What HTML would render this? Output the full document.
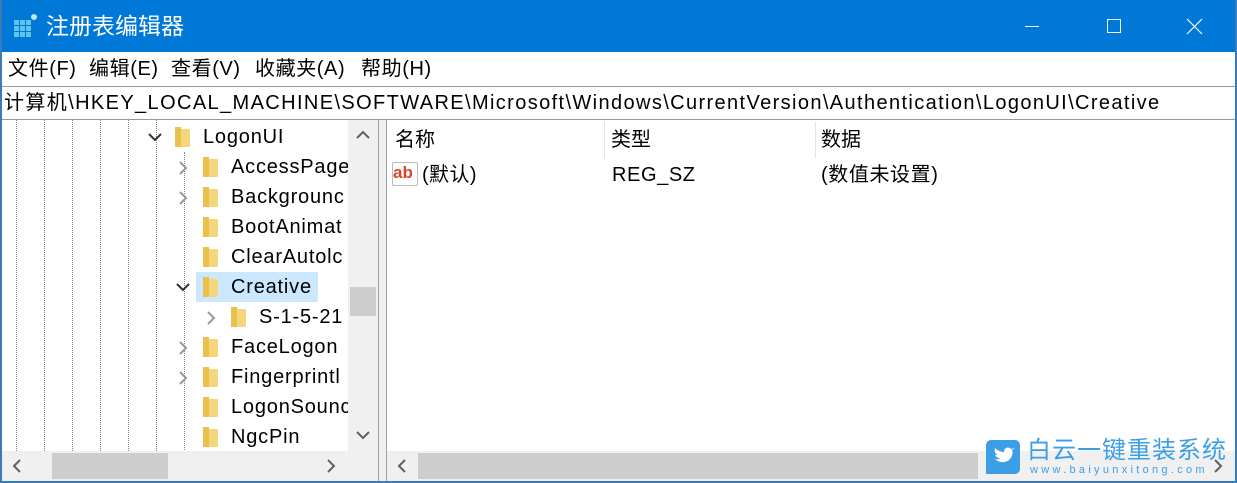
<!DOCTYPE html>
<html><head><meta charset="utf-8"><style>
*{margin:0;padding:0;box-sizing:border-box}
body{width:1237px;height:483px;overflow:hidden;background:#fff;font-family:"Liberation Sans","Noto Sans CJK SC",sans-serif;position:relative;color:#000}
.a{position:absolute}
.t{font-size:20px;white-space:nowrap;line-height:30px}
.tr .t{letter-spacing:0.8px}
.vd{position:absolute;top:0;height:331px;border-left:1px dotted #888}
.fold{position:absolute;width:16px;height:20px}
.fold::before{content:"";position:absolute;left:3px;top:2px;width:12px;height:18px;background:#f5d67a;border-radius:1px}
.fold::after{content:"";position:absolute;left:0;top:0;width:6px;height:20px;background:#e9bf4e}
</style></head><body>
<div class="a" style="left:0;top:0;width:1237px;height:52px;background:#0078d7"></div>
<svg class="a" style="left:14px;top:14px" width="24" height="24"><g fill="#5fc3ea"><rect x="0" y="6" width="5" height="5"/><rect x="6" y="6" width="5" height="5"/><rect x="12" y="6" width="5" height="5"/><rect x="0" y="12" width="5" height="5"/><rect x="6" y="12" width="5" height="5"/><rect x="12" y="12" width="5" height="5"/><rect x="0" y="18" width="5" height="5"/><rect x="6" y="18" width="5" height="5"/><rect x="12" y="18" width="5" height="5"/></g><circle cx="20" cy="3" r="3" fill="#bfe8f7"/></svg>
<div class="a t" style="left:46px;top:11px;color:#fff;font-size:23px">注册表编辑器</div>
<div class="a" style="left:1025px;top:26px;width:14px;height:1px;background:#fff"></div>
<div class="a" style="left:1107px;top:19px;width:14px;height:14px;border:1px solid #fff"></div>
<svg class="a" style="left:1186px;top:18px" width="17" height="17"><path d="M1 1L16 16M16 1L1 16" stroke="#fff" stroke-width="1.2"/></svg>
<div class="a t" style="left:8px;top:54px;font-size:20px;letter-spacing:0.6px">文件(F)</div>
<div class="a t" style="left:89px;top:54px;font-size:20px;letter-spacing:0.6px">编辑(E)</div>
<div class="a t" style="left:171px;top:54px;font-size:20px;letter-spacing:0.6px">查看(V)</div>
<div class="a t" style="left:255px;top:54px;font-size:20px;letter-spacing:0.6px">收藏夹(A)</div>
<div class="a t" style="left:361px;top:54px;font-size:20px;letter-spacing:0.6px">帮助(H)</div>
<div class="a" style="left:0;top:86px;width:1237px;height:34px;border-top:1px solid #999;border-bottom:1px solid #999"></div>
<div class="a t" style="left:4px;top:88px;font-size:20px;letter-spacing:1.38px">计算机\HKEY_LOCAL_MACHINE\SOFTWARE\Microsoft\Windows\CurrentVersion\Authentication\LogonUI\Creative</div>
<div class="a" style="left:0;top:0;width:2px;height:483px;background:#3d7ab8"></div>
<div class="a" style="left:1235px;top:0;width:2px;height:483px;background:#3d7ab8"></div>
<div class="a" style="left:0;top:481px;width:1237px;height:2px;background:#3d7ab8"></div>
<div class="a tr" style="left:0;top:120px;width:348px;height:331px;overflow:hidden">
<div class="vd" style="left:16px"></div><div class="vd" style="left:44px"></div><div class="vd" style="left:72px"></div><div class="vd" style="left:100px"></div><div class="vd" style="left:128px"></div><div class="vd" style="left:156px"></div><div class="vd" style="left:184px;top:32px;height:300px"></div>
<div class="a" style="left:196px;top:152px;width:122px;height:30px;background:#cce8ff"></div>
<svg class="a" style="left:147px;top:12px" width="16" height="10"><path d="M2 2L8 8L14 2" stroke="#333" stroke-width="2" fill="none"/></svg>
<svg class="a" style="left:175px;top:162px" width="16" height="10"><path d="M2 2L8 8L14 2" stroke="#333" stroke-width="2" fill="none"/></svg>
<svg class="a" style="left:178px;top:40px" width="10" height="16"><path d="M2 2L8 8L2 14" stroke="#999" stroke-width="2" fill="none"/></svg>
<svg class="a" style="left:178px;top:70px" width="10" height="16"><path d="M2 2L8 8L2 14" stroke="#999" stroke-width="2" fill="none"/></svg>
<svg class="a" style="left:206px;top:190px" width="10" height="16"><path d="M2 2L8 8L2 14" stroke="#999" stroke-width="2" fill="none"/></svg>
<svg class="a" style="left:178px;top:220px" width="10" height="16"><path d="M2 2L8 8L2 14" stroke="#999" stroke-width="2" fill="none"/></svg>
<svg class="a" style="left:178px;top:250px" width="10" height="16"><path d="M2 2L8 8L2 14" stroke="#999" stroke-width="2" fill="none"/></svg>
<div class="fold" style="left:175px;top:7px"></div><div class="a t" style="left:203px;top:2px">LogonUI</div>
<div class="fold" style="left:203px;top:37px"></div><div class="a t" style="left:231px;top:32px">AccessPage</div>
<div class="fold" style="left:203px;top:67px"></div><div class="a t" style="left:231px;top:62px">Backgrounc</div>
<div class="fold" style="left:203px;top:97px"></div><div class="a t" style="left:231px;top:92px">BootAnimat</div>
<div class="fold" style="left:203px;top:127px"></div><div class="a t" style="left:231px;top:122px">ClearAutolc</div>
<div class="fold" style="left:203px;top:157px"></div><div class="a t" style="left:231px;top:152px">Creative</div>
<div class="fold" style="left:231px;top:187px"></div><div class="a t" style="left:259px;top:182px">S-1-5-21</div>
<div class="fold" style="left:203px;top:217px"></div><div class="a t" style="left:231px;top:212px">FaceLogon</div>
<div class="fold" style="left:203px;top:247px"></div><div class="a t" style="left:231px;top:242px">Fingerprintl</div>
<div class="fold" style="left:203px;top:277px"></div><div class="a t" style="left:231px;top:272px">LogonSounc</div>
<div class="fold" style="left:203px;top:307px"></div><div class="a t" style="left:231px;top:302px">NgcPin</div>
</div>
<div class="a" style="left:348px;top:120px;width:30px;height:332px;background:#f0f0f0"></div>
<div class="a" style="left:350px;top:287px;width:26px;height:29px;background:#cdcdcd"></div>
<svg class="a" style="left:355px;top:130px" width="16" height="10"><path d="M2 8L8 2L14 8" stroke="#606060" stroke-width="2" fill="none"/></svg>
<svg class="a" style="left:355px;top:430px" width="16" height="10"><path d="M2 2L8 8L14 2" stroke="#606060" stroke-width="2" fill="none"/></svg>
<div class="a" style="left:2px;top:451px;width:376px;height:30px;background:#f0f0f0"></div>
<div class="a" style="left:52px;top:453px;width:116px;height:26px;background:#cdcdcd"></div>
<svg class="a" style="left:12px;top:458px" width="10" height="16"><path d="M8 2L2 8L8 14" stroke="#606060" stroke-width="2" fill="none"/></svg>
<svg class="a" style="left:326px;top:458px" width="10" height="16"><path d="M2 2L8 8L2 14" stroke="#606060" stroke-width="2" fill="none"/></svg>
<div class="a" style="left:378px;top:120px;width:9px;height:361px;background:#f0f0f0;border-left:1px solid #a0a0a0;border-right:1px solid #a0a0a0"></div>
<div class="a t" style="left:395px;top:125px">名称</div>
<div class="a" style="left:604px;top:122px;width:1px;height:36px;background:#e5e5e5"></div>
<div class="a t" style="left:611px;top:125px">类型</div>
<div class="a" style="left:815px;top:122px;width:1px;height:36px;background:#e5e5e5"></div>
<div class="a t" style="left:821px;top:125px">数据</div>
<div class="a" style="left:392px;top:162px;width:26px;height:24px;background:#fff;border:1px solid #bbb;border-radius:2px"></div>
<div class="a" style="left:393px;top:163px;font:bold 17px 'Liberation Sans',sans-serif;color:#d9472b;line-height:20px">ab</div>
<div class="a t" style="left:422px;top:160px;letter-spacing:0.4px">(默认)</div>
<div class="a t" style="left:612px;top:160px;letter-spacing:0.6px">REG_SZ</div>
<div class="a t" style="left:821px;top:160px;letter-spacing:0.6px">(数值未设置)</div>
<div class="a" style="left:387px;top:451px;width:848px;height:30px;background:#f0f0f0"></div>
<div class="a" style="left:418px;top:453px;width:560px;height:26px;background:#cdcdcd"></div>
<svg class="a" style="left:397px;top:458px" width="10" height="16"><path d="M8 2L2 8L8 14" stroke="#606060" stroke-width="2" fill="none"/></svg>
<svg class="a" style="left:1213px;top:458px" width="10" height="16"><path d="M2 2L8 8L2 14" stroke="#606060" stroke-width="2" fill="none"/></svg>
<div class="a" style="left:986px;top:440px;width:34px;height:34px;background:#3c9fe6;border-radius:5px 5px 5px 0"></div>
<svg class="a" style="left:992px;top:446px" width="24" height="22"><path d="M2 12C5 16 12 18 17 14C21 10 21 6 20 4L23 2L19 3C16 0 12 2 12 6C8 6 5 4 3 2C2 5 3 8 6 9L3 9C4 11 6 12 8 12C6 14 4 14 2 12Z" fill="#fff"/></svg>
<div class="a" style="left:1027px;top:438px;font-size:24px;color:#3c9fe6;letter-spacing:1px;line-height:26px;white-space:nowrap">白云一键重装系统</div>
<div class="a" style="left:1030px;top:464px;font-size:11px;color:#3c9fe6;letter-spacing:3.3px;line-height:13px;white-space:nowrap">www.baiyunxitong.com</div>
</body></html>
